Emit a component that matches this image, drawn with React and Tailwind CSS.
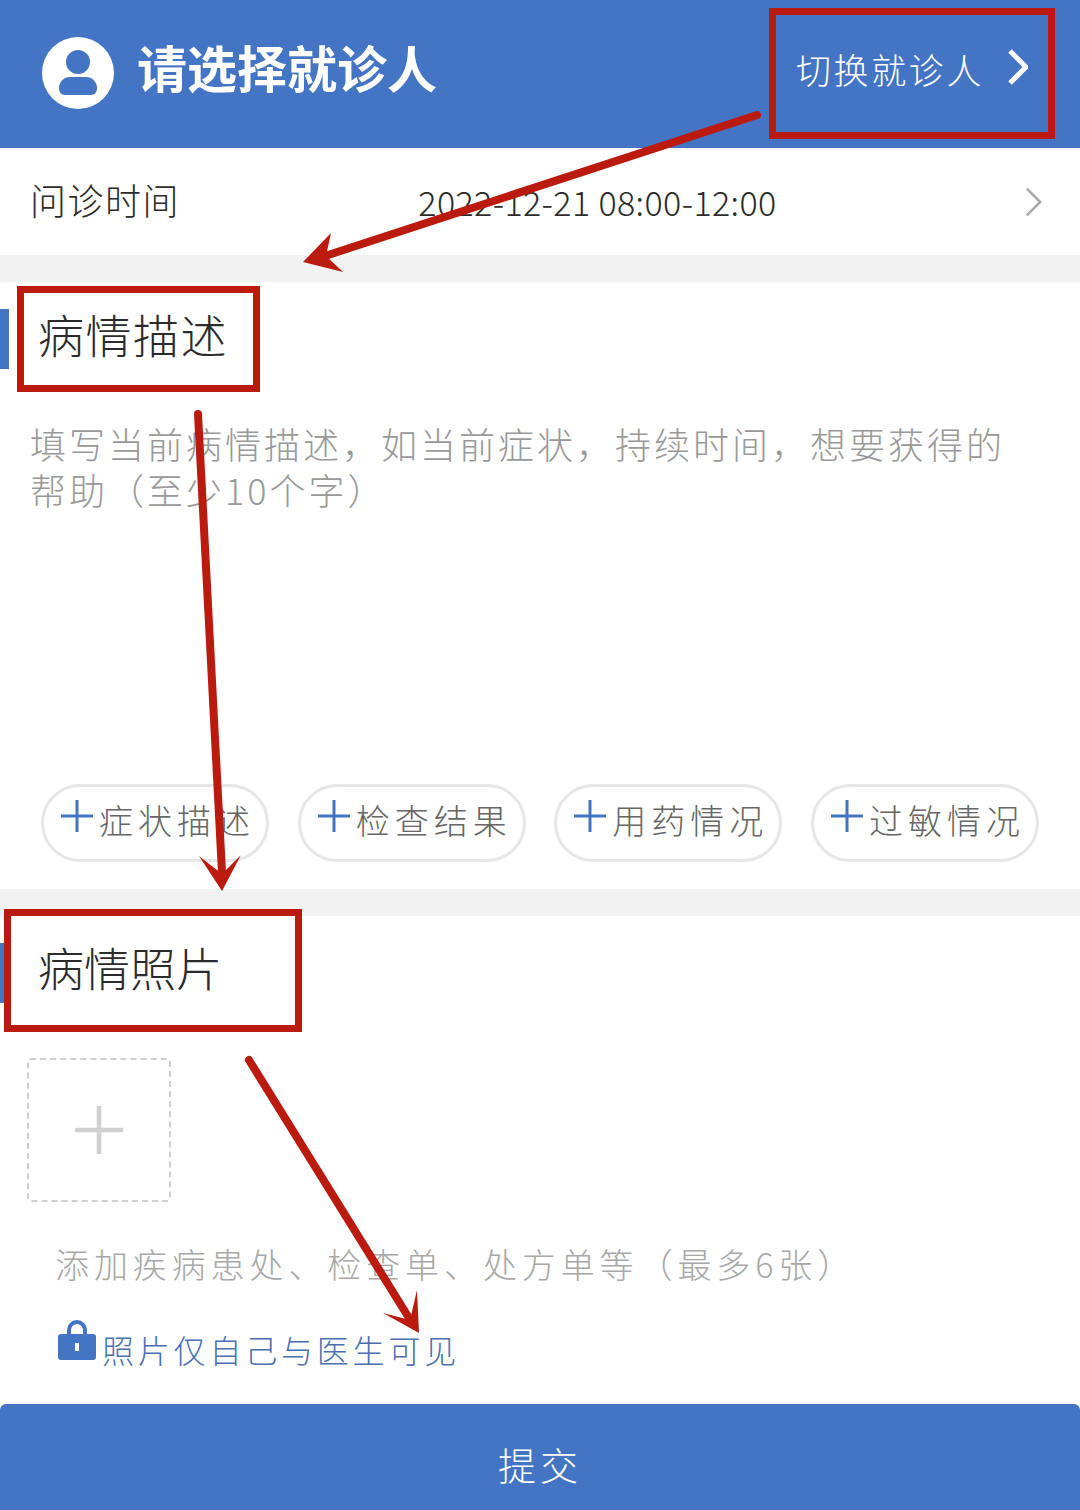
import React from 'react';

const PlusIcon = ({ className }) => (
  <svg viewBox="0 0 32 32" className={className} fill="none" stroke="currentColor" strokeWidth="3">
    <path d="M0 16H32M16 0V32" />
  </svg>
);

const Chevron = ({ className, width = 3 }) => (
  <svg viewBox="0 0 20 36" className={className} fill="none" stroke="currentColor" strokeWidth={width}>
    <path d="M2 2L18 18L2 34" />
  </svg>
);

const tags = ['症状描述', '检查结果', '用药情况', '过敏情况'];

// full-width punctuation, written as escapes so it stays full-width
const descHint = '填写当前病情描述\uFF0C如当前症状\uFF0C持续时间\uFF0C想要获得的帮助\uFF08至少10个字\uFF09';
const photoHint = '添加疾病患处\u3001检查单\u3001处方单等\uFF08最多6张\uFF09';

const App = () => {
  return (
    <div className="relative h-[1510px] w-[1080px] overflow-hidden bg-white font-['Noto_Sans_CJK_SC','Noto_Sans',sans-serif] font-light text-[#2b2b2b]">
      {/* Header */}
      <header className="flex h-[148px] items-center justify-between bg-[#4474c4] pl-[42px] pr-[52px] text-white">
        <div className="flex items-center gap-[23px]">
          <div className="mb-[3px] flex h-[72px] w-[72px] items-center justify-center rounded-full bg-white">
            <svg viewBox="0 0 72 72" className="h-[72px] w-[72px]" fill="#4474c4">
              <circle cx="36" cy="25" r="12" />
              <path d="M28 40h16a11 11 0 0 1 11 11v1a6 6 0 0 1-6 6H23a6 6 0 0 1-6-6v-1a11 11 0 0 1 11-11Z" />
            </svg>
          </div>
          <h1 className="mb-[16px] text-[50px] font-bold leading-none">请选择就诊人</h1>
        </div>
        <div className="flex items-center gap-[24px]">
          <span className="mb-[12px] text-[35px] leading-none tracking-[2.6px]">切换就诊人</span>
          <Chevron className="mb-[14px] h-[38px] w-[20px]" width={5} />
        </div>
      </header>

      {/* Time row */}
      <div className="flex h-[107px] items-center justify-between pl-[30px] pr-[38px]">
        <span className="mb-[6px] text-[36px] leading-none tracking-[1.5px]">问诊时间</span>
        <span className="mr-[10px] text-[34px] leading-none tracking-[0.4px]">2022-12-21 08:00-12:00</span>
        <Chevron className="h-[30px] w-[17px] text-[#a8a8a8]" />
      </div>
      <div className="h-[27px] bg-[#f2f2f2]" />

      {/* Description */}
      <section className="flex h-[607px] flex-col">
        <div className="mt-[27px] flex h-[60px] items-center gap-[29px]">
          <div className="h-[60px] w-[9px] bg-[#4474c4]" />
          <h2 className="mb-[12px] text-[46px] leading-none tracking-[1.5px]">病情描述</h2>
        </div>
        <p className="mt-[51px] w-[1020px] pl-[30px] text-[36px] leading-[46px] tracking-[3px] text-[#999999]">
          {descHint}
        </p>
        <div className="mt-auto mb-[27px] flex justify-between px-[41px]">
          {tags.map((tag) => (
            <div
              key={tag}
              className="flex h-[78px] w-[228px] items-center gap-[6px] rounded-full border-[3px] border-[#e6e6e6] pl-[17px]"
            >
              <PlusIcon className="mb-[14px] h-[32px] w-[32px] shrink-0 text-[#4474c4]" />
              <span className="mb-[6px] text-[34px] leading-none tracking-[5px] text-[#666666]">{tag}</span>
            </div>
          ))}
        </div>
      </section>
      <div className="h-[27px] bg-[#f2f2f2]" />

      {/* Photos */}
      <section className="flex h-[488px] flex-col">
        <div className="mt-[27px] flex h-[60px] items-center gap-[29px]">
          <div className="h-[60px] w-[9px] bg-[#4474c4]" />
          <h2 className="mb-[14px] text-[46px] leading-none">病情照片</h2>
        </div>
        <div className="ml-[27px] mt-[55px] flex h-[144px] w-[144px] items-center justify-center rounded-[3px] border-2 border-dashed border-[#cfcfcf]">
          <PlusIcon className="h-[48px] w-[48px] text-[#d0d0d0]" />
        </div>
        <p className="ml-[55px] mt-[45px] text-[34px] leading-none tracking-[4.9px] text-[#a8a8a8]">
          {photoHint}
        </p>
        <div className="ml-[58px] mt-[37px] flex items-start gap-[6px]">
          <svg viewBox="0 0 38 42" className="h-[42px] w-[38px]" fill="#4474c4">
            <path d="M9 17V12a10 10 0 0 1 20 0v5h-4V12a6 6 0 0 0-12 0v5Z" />
            <path fillRule="evenodd" d="M3 16h32a3 3 0 0 1 3 3v20a3 3 0 0 1-3 3H3a3 3 0 0 1-3-3V19a3 3 0 0 1 3-3Zm14 9v8h4v-8Z" />
          </svg>
          <span className="mt-[15px] text-[32px] leading-none tracking-[3.8px] text-[#4a6fb0]">照片仅自己与医生可见</span>
        </div>
      </section>

      {/* Submit */}
      <button className="flex h-[106px] w-full items-center justify-center rounded-t-[6px] bg-[#4474c4] pt-[14px] text-[38px] leading-none tracking-[4px] text-white">
        提交
      </button>

      {/* Red annotations on top of the screenshot */}
      <div className="absolute left-[769px] top-[8px] h-[131px] w-[286px] border-[7px] border-[#bb1a0f]" />
      <div className="absolute left-[17px] top-[286px] h-[106px] w-[243px] border-[7px] border-[#bb1a0f]" />
      <div className="absolute left-[4px] top-[909px] h-[123px] w-[298px] border-[7px] border-[#bb1a0f]" />
      <svg viewBox="0 0 1080 1510" className="absolute left-0 top-0 h-[1510px] w-[1080px]" fill="#bb1a0f" stroke="#bb1a0f">
        <g fill="none" strokeWidth="8" strokeLinecap="round">
          <path d="M757 115L325 256" />
          <path d="M198 414L222 872" />
          <path d="M249 1060L409 1318" />
        </g>
        <g stroke="none">
          <path d="M303 262L331 233L326 256L343 272Z" />
          <path d="M222 891L199 856L222 874L241 855Z" />
          <path d="M419 1333L417 1290L410 1320L383 1313Z" />
        </g>
      </svg>
    </div>
  );
};

export default App;
